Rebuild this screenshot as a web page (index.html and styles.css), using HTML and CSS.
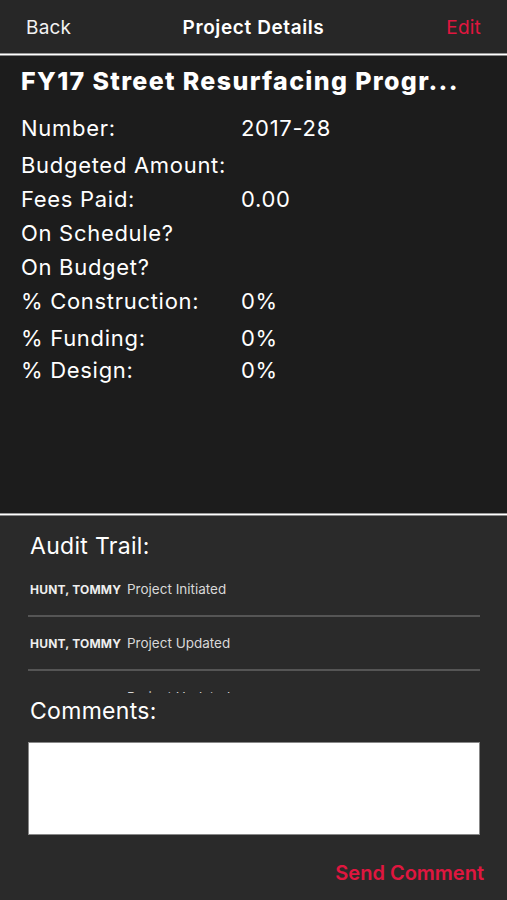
FILE: index.html
```html
<!DOCTYPE html>
<html>
<head>
<meta charset="UTF-8">
<title>Project Details</title>
<link rel="stylesheet" href="styles.css">
</head>
<body>
<div class="nav">
  <span class="nav-back">Back</span>
  <span class="nav-title">Project Details</span>
  <span class="nav-edit">Edit</span>
</div>
<div class="rule"></div>
<div class="details">
  <h1 class="project-name">FY17 Street Resurfacing Progr...</h1>
  <div class="field"><span class="label">Number:</span><span class="value">2017-28</span></div>
  <div class="field gap"><span class="label">Budgeted Amount:</span><span class="value"></span></div>
  <div class="field"><span class="label">Fees Paid:</span><span class="value">0.00</span></div>
  <div class="field"><span class="label">On Schedule?</span><span class="value"></span></div>
  <div class="field"><span class="label">On Budget?</span><span class="value"></span></div>
  <div class="field"><span class="label">% Construction:</span><span class="value">0%</span></div>
  <div class="field gap"><span class="label">% Funding:</span><span class="value">0%</span></div>
  <div class="field tight"><span class="label">% Design:</span><span class="value">0%</span></div>
</div>
<div class="rule"></div>
<div class="audit">
  <h2 class="section-title">Audit Trail:</h2>
  <div class="trail">
    <div class="entry"><span class="who">HUNT, TOMMY</span> Project Initiated</div>
    <div class="entry"><span class="who">HUNT, TOMMY</span> Project Updated</div>
    <div class="entry"><span class="who">HUNT, TOMMY</span> Project Updated</div>
  </div>
  <h2 class="section-title comments-title">Comments:</h2>
  <div class="comment-box"></div>
  <div class="send">Send Comment</div>
</div>
</body>
</html>
```

FILE: styles.css
```css
* {
  margin: 0;
  padding: 0;
  box-sizing: border-box;
}

body {
  width: 507px;
  height: 900px;
  overflow: hidden;
  background-color: #2a2a2a;
  color: #fff;
  font-family: Inter, "Liberation Sans", sans-serif;
}

.nav {
  height: 53px;
  background-color: #272727;
  display: flex;
  align-items: center;
  justify-content: space-between;
  padding: 2px 26px 0 26px;
  font-size: 19px;
  letter-spacing: 0.2px;
  position: relative;
}

.nav-back {
  color: #f2f2f2;
}

.nav-title {
  font-weight: 600;
  letter-spacing: 0.6px;
  position: absolute;
  left: 0;
  right: 0;
  text-align: center;
  pointer-events: none;
}

.nav-edit {
  color: #e0163f;
}

.rule {
  height: 3px;
  background-color: #fff;
  border-top: 1px solid #9a9a9a;
  border-bottom: 1px solid #8a8a8a;
}

.details {
  height: 457px;
  background-color: #1c1c1c;
  padding: 10px 21px 0 21px;
}

.project-name {
  font-size: 25px;
  font-weight: 800;
  letter-spacing: 1.35px;
  margin-bottom: 15px;
}

.field {
  display: flex;
  font-size: 22px;
  letter-spacing: 0.7px;
  height: 34px;
  line-height: 34px;
}

.gap {
  margin-top: 3px;
}

.tight {
  margin-top: -2px;
}

.label {
  width: 220px;
}

.audit {
  padding: 16px 27px 0 28px;
}

.section-title {
  font-size: 23px;
  font-weight: 400;
  letter-spacing: 0.3px;
  padding-left: 2px;
}

.trail {
  height: 130px;
  overflow: hidden;
  margin-top: 3px;
}

.entry {
  height: 54px;
  padding: 18px 0 0 2px;
  font-size: 13.5px;
  color: #d8d8d8;
  border-bottom: 2px solid #555;
}

.who {
  font-size: 12px;
  font-weight: 700;
  letter-spacing: 0.2px;
  color: #eee;
  margin-right: 2px;
}

.comments-title {
  margin-top: 4px;
}

.comment-box {
  height: 93px;
  background-color: #fff;
  border: 1px solid #888;
  margin-top: 17px;
}

.send {
  color: #e0163f;
  font-size: 20px;
  font-weight: 600;
  text-align: right;
  margin-top: 26px;
  margin-right: -4px;
}
```
